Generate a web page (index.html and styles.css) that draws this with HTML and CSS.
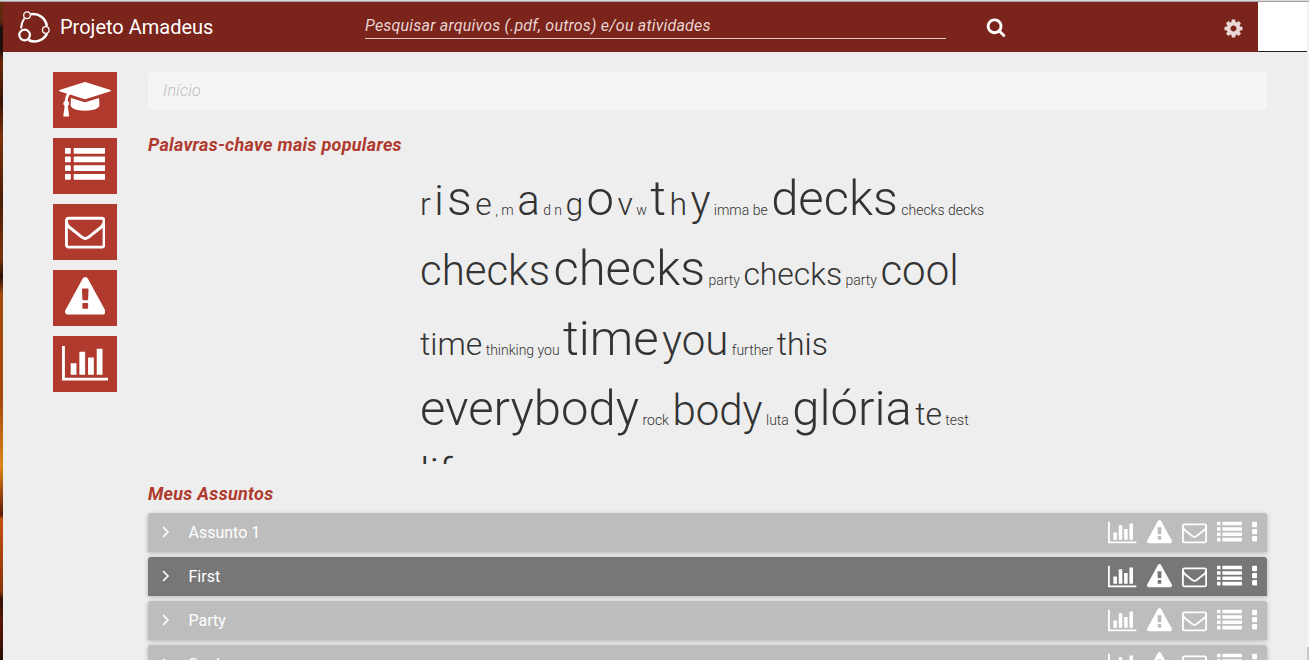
FILE: index.html
```html
<!DOCTYPE html>
<html lang="pt-BR">
<head>
<meta charset="utf-8">
<title>Projeto Amadeus</title>
<link rel="stylesheet" href="styles.css">
</head>
<body>
<svg class="defs" aria-hidden="true">
  <symbol id="cap" viewBox="0 0 2304 1792"><path d="M1774 836l18 316q4 69-82 128t-235 93.500-323 34.500-323-34.500-235-93.500-82-128l18-316 574 181q22 7 48 7t48-7zm530-324q0 23-22 31l-1120 352q-4 1-10 1t-10-1l-652-206q-43 34-71 111.500t-34 178.500q63 36 63 109 0 69-58 107l58 433q2 14-8 25-9 11-24 11h-192q-15 0-24-11-10-11-8-25l58-433q-58-38-58-107 0-73 65-111 11-207 98-330l-333-104q-22-8-22-31t22-31l1120-352q4-1 10-1t10 1l1120 352q22 8 22 31z"/></symbol>
  <symbol id="list" viewBox="0 0 1792 1792"><path d="M32 128h192q32 0 32 32v192q0 32-32 32h-192q-32 0-32-32v-192q0-32 32-32zM32 512h192q32 0 32 32v192q0 32-32 32h-192q-32 0-32-32v-192q0-32 32-32zM32 896h192q32 0 32 32v192q0 32-32 32h-192q-32 0-32-32v-192q0-32 32-32zM32 1280h192q32 0 32 32v192q0 32-32 32h-192q-32 0-32-32v-192q0-32 32-32zM416 128h1344q32 0 32 32v192q0 32-32 32h-1344q-32 0-32-32v-192q0-32 32-32zM416 512h1344q32 0 32 32v192q0 32-32 32h-1344q-32 0-32-32v-192q0-32 32-32zM416 896h1344q32 0 32 32v192q0 32-32 32h-1344q-32 0-32-32v-192q0-32 32-32zM416 1280h1344q32 0 32 32v192q0 32-32 32h-1344q-32 0-32-32v-192q0-32 32-32z"/></symbol>
  <symbol id="mail" viewBox="0 0 1792 1792"><path d="M1664 1504v-768q-32 36-69 66-268 206-426 338-51 43-83 67t-86.500 48.500-102.500 24.500h-2q-48 0-102.500-24.500t-86.500-48.500-83-67q-158-132-426-338-37-30-69-66v768q0 13 9.500 22.500t22.500 9.500h1472q13 0 22.500-9.500t9.500-22.500zm0-1051v-24.500l-.5-13-3-12.500-5.500-9-9-7.500-14-2.500h-1472q-13 0-22.500 9.500t-9.500 22.500q0 168 147 284 193 152 401 317 6 5 35 29.500t46 37.500 44.500 31.500 50.500 27.500 43 9h2q20 0 43-9t50.500-27.500 44.500-31.500 46-37.500 35-29.500q208-165 401-317 54-43 100.500-115.500t46.500-131.500zm128-37v1088q0 66-47 113t-113 47h-1472q-66 0-113-47t-47-113v-1088q0-66 47-113t113-47h1472q66 0 113 47t47 113z"/></symbol>
  <symbol id="warn" viewBox="0 0 1792 1792"><path d="M1024 1375v-190q0-14-9.500-23.500t-22.500-9.500h-192q-13 0-22.500 9.500t-9.500 23.500v190q0 14 9.500 23.500t22.500 9.500h192q13 0 22.500-9.500t9.500-23.500zm-2-374l18-459q0-12-10-19-13-11-24-11h-220q-11 0-24 11-10 7-10 21l17 457q0 10 10 16.500t24 6.500h185q14 0 23.500-6.500t10.500-16.500zm-14-934l768 1408q35 63-2 126-17 29-46.500 46t-63.500 17h-1536q-34 0-63.500-17t-46.500-46q-37-63-2-126l768-1408q17-31 47-49t65-18 65 18 47 49z"/></symbol>
  <symbol id="chart" viewBox="0 0 2048 1792"><path d="M640 896v512h-256v-512h256zm384-512v1024h-256v-1024h256zm1024 1152v128h-2048v-1536h128v1408h1920zm-640-896v768h-256v-768h256zm384-384v1152h-256v-1152h256z"/></symbol>
  <symbol id="dots" viewBox="0 0 384 1792"><rect y="128" width="384" height="384" rx="96"/><rect y="640" width="384" height="384" rx="96"/><rect y="1152" width="384" height="384" rx="96"/></symbol>
  <symbol id="gear" viewBox="0 0 1792 1792"><path d="M1152 896q0-106-75-181t-181-75-181 75-75 181 75 181 181 75 181-75 75-181zm512-109v222q0 12-8 23t-20 13l-185 28q-19 54-39 91 35 50 107 138 10 12 10 25t-9 23q-27 37-99 108t-94 71q-12 0-26-9l-138-108q-44 23-91 38-16 136-29 186-7 28-36 28h-222q-14 0-24.500-8.500t-11.500-21.500l-28-184q-49-16-90-37l-141 107q-10 9-25 9-14 0-25-11-126-114-165-168-7-10-7-23 0-12 8-23 15-21 51-66.500t54-70.500q-27-50-41-99l-183-27q-13-2-21-12.500t-8-23.500v-222q0-12 8-23t19-13l186-28q14-46 39-92-40-57-107-138-10-12-10-24 0-10 9-23 26-36 98.500-107.500t94.500-71.500q13 0 26 10l138 107q44-23 91-38 16-136 29-186 7-28 36-28h222q14 0 24.500 8.500t11.500 21.500l28 184q49 16 90 37l142-107q9-9 24-9 13 0 25 10 129 119 165 170 7 8 7 22 0 12-8 23-15 21-51 66.500t-54 70.500q26 50 41 98l183 28q13 2 21 12.500t8 23.500z"/></symbol>
  <symbol id="search" viewBox="0 0 1792 1792"><path d="M1216 832q0-185-131.500-316.500t-316.500-131.500-316.500 131.500-131.500 316.500 131.500 316.500 316.500 131.500 316.500-131.500 131.500-316.500zm512 832q0 52-38 90t-90 38q-54 0-90-38l-343-342q-179 124-399 124-143 0-273.500-55.500t-225-150-150-225-55.500-273.500 55.500-273.500 150-225 225-150 273.500-55.500 273.500 55.500 225 150 150 225 55.500 273.500q0 220-124 399l343 343q37 37 37 90z"/></symbol>
  <symbol id="chevron" viewBox="0 0 10 14"><path d="M2 2l5 5-5 5" fill="none" stroke="currentColor" stroke-width="1.700"/></symbol>
</svg>
<div class="edge-top"></div>
<div class="frame">
  <div class="strip"></div>
  <div class="page">
    <header class="topbar">
      <svg class="logo" viewBox="0 0 34 34">
        <path stroke-width="2.600" d="M14 4.200A13.700 13.700 0 0 1 29.800 16M30 23.500A13.700 13.700 0 0 1 11.500 30"/>
        <path stroke-width="2" d="M7.300 8.500Q4.200 13 4 18.500"/>
        <circle cx="10" cy="5.200" r="3.300" stroke-width="1.300"/>
        <circle cx="7.600" cy="25" r="5.300" stroke-width="2.200"/>
        <circle cx="28.800" cy="20" r="3.300" stroke-width="1.300"/>
      </svg>
      <span class="brand">Projeto Amadeus</span>
      <div class="search">Pesquisar arquivos (.pdf, outros) e/ou atividades</div>
      <svg class="search-icon"><use href="#search"/></svg>
      <svg class="gear"><use href="#gear"/></svg>
      <div class="avatar"></div>
    </header>
    <div class="content">
      <nav class="side">
        <a class="tile"><svg class="w-cap"><use href="#cap"/></svg></a>
        <a class="tile"><svg><use href="#list"/></svg></a>
        <a class="tile"><svg><use href="#mail"/></svg></a>
        <a class="tile"><svg><use href="#warn"/></svg></a>
        <a class="tile"><svg class="w-chart"><use href="#chart"/></svg></a>
      </nav>
      <main class="main">
        <div class="crumb">Início</div>
        <h4 class="title">Palavras-chave mais populares</h4>
        <div class="cloud">
          <span class="m">r</span> <span class="l">i</span> <span class="x">s</span> <span class="m">e</span> <span>,</span> <span>m</span> <span class="l">a</span> <span>d</span> <span>n</span> <span class="m">g</span> <span class="x">o</span> <span class="m">v</span> <span>w</span> <span class="x">t</span> <span class="m">h</span> <span class="l">y</span> <span>imma be</span> <span class="x">decks</span> <span>checks decks</span>
          <span class="l">checks</span> <span class="x">checks</span> <span>party</span> <span class="m">checks</span> <span>party</span> <span class="l">cool</span>
          <span class="m">time</span> <span>thinking you</span> <span class="x">time</span> <span class="l">you</span> <span>further</span> <span class="m">this</span>
          <span class="x">everybody</span> <span>rock</span> <span class="l">body</span> <span>luta</span> <span class="x">glória</span> <span class="m">te</span> <span>test</span>
          <span class="l">life</span>
        </div>
        <h4 class="title subjects">Meus Assuntos</h4>
        <div class="rows">
          <div class="row"><svg class="chev"><use href="#chevron"/></svg><span class="name">Assunto 1</span><svg class="w-chart"><use href="#chart"/></svg><svg><use href="#warn"/></svg><svg><use href="#mail"/></svg><svg><use href="#list"/></svg><svg class="w-dots"><use href="#dots"/></svg></div>
          <div class="row active"><svg class="chev"><use href="#chevron"/></svg><span class="name">First</span><svg class="w-chart"><use href="#chart"/></svg><svg><use href="#warn"/></svg><svg><use href="#mail"/></svg><svg><use href="#list"/></svg><svg class="w-dots"><use href="#dots"/></svg></div>
          <div class="row"><svg class="chev"><use href="#chevron"/></svg><span class="name">Party</span><svg class="w-chart"><use href="#chart"/></svg><svg><use href="#warn"/></svg><svg><use href="#mail"/></svg><svg><use href="#list"/></svg><svg class="w-dots"><use href="#dots"/></svg></div>
          <div class="row"><svg class="chev"><use href="#chevron"/></svg><span class="name">Soul</span><svg class="w-chart"><use href="#chart"/></svg><svg><use href="#warn"/></svg><svg><use href="#mail"/></svg><svg><use href="#list"/></svg><svg class="w-dots"><use href="#dots"/></svg></div>
        </div>
      </main>
    </div>
  </div>
  <div class="gutter"><div class="thumb"></div></div>
</div>
</body>
</html>
```
FILE: styles.css
```css
* { box-sizing: border-box; }
body {
  margin: 0;
  height: 660px;
  overflow: hidden;
  background: #eee;
  font-family: Roboto, "Liberation Sans", sans-serif;
  font-size: 14px;
  color: #333;
}
svg { display: block; fill: currentColor; flex: none; }
.defs { display: none; }
.edge-top { height: 2px; background: #d9d9d9; border-bottom: 1px solid #a3a3a3; }
.frame { display: flex; height: 658px; }
.strip {
  width: 3px;
  background: linear-gradient(#6a2c10 0, #5a250f 20px, #1c0f0c 26px, #21100a 48px, #6b2705 60px, #381405 100px, #7d3208 135px, #4a1c05 200px, #7a3407 255px, #2a1108 275px, #a24b0b 292px, #a9480a 400px, #dd8518 465px, #8b3a0a 497px, #5d1c05 513px, #c3500f 517px, #8a3406 590px, #30100a 597px, #5a1804 620px, #280b04 100%);
}
.page { flex: 1; min-width: 0; overflow: hidden; }
.gutter { width: 2px; display: flex; flex-direction: column; justify-content: flex-end; background: #f2f2f2; }
.thumb { height: 13px; background: #c9c9c9; }

.topbar { display: flex; height: 50px; background: #7a241b; color: #fff; }
.logo { width: 34px; height: 34px; margin: 8px 0 0 14px; fill: none; stroke: #fff; }
.brand { width: 305px; margin-left: 9px; font-size: 20px; line-height: 50px; white-space: nowrap; }
.search {
  width: 581px;
  height: 27px;
  margin-top: 10px;
  border-bottom: 1px solid #dcc8c6;
  font-size: 16px;
  font-style: italic;
  letter-spacing: .21px;
  line-height: 27px;
  color: #e8d5d3;
}
.search-icon { width: 20px; height: 20px; margin: 15px 0 0 40px; }
.gear { width: 21px; height: 21px; margin: 15.500px 0 0 217px; color: #ead8d6; }
.avatar { width: 49px; margin-left: auto; background: #fff; border-bottom: 1px solid #28211f; }

.content { display: flex; padding: 20px 40px 0 50px; }
.side { display: flex; flex-direction: column; gap: 10px; width: 64px; margin-right: 31px; }
.tile { display: flex; justify-content: center; height: 56px; padding-top: 6.500px; background: #b03a2e; color: #fff; }
.tile svg { width: 40.500px; height: 40.500px; }
.tile .w-cap { width: 52px; }
.tile .w-chart { width: 46.300px; }

.main { flex: 1; min-width: 0; }
.crumb {
  height: 38px;
  padding-left: 15px;
  border-radius: 4px;
  background: #f5f5f5;
  color: #bdbdbd;
  font-size: 16px;
  font-style: italic;
  font-weight: 300;
  letter-spacing: .3px;
  line-height: 37px;
}
.title { margin: 25px 0 0; font-size: 18px; font-style: italic; font-weight: 700; letter-spacing: .29px; line-height: 20px; color: #b03a2e; }
.cloud {
  width: 570px;
  height: 300px;
  margin: 9px 0 0 272px;
  overflow: hidden;
  font-weight: 300;
  line-height: 1.42857;
}
.cloud .m { font-size: 31.900px; }
.cloud .l { font-size: 42px; }
.cloud .x { font-size: 49px; }
.title.subjects { margin-top: 20px; }
.rows { display: flex; flex-direction: column; gap: 5px; margin-top: 9px; }
.row {
  display: flex;
  align-items: flex-start;
  gap: 10px;
  height: 39px;
  padding: 7px 10px 0 13px;
  border-radius: 3px 3px 0 0;
  background: #bdbdbd;
  box-shadow: 0 1px 4px rgba(0, 0, 0, .25);
  color: #fff;
}
.row.active { background: #777; }
.row svg { width: 25px; height: 25px; }
.row .w-chart { width: 28.600px; }
.row .w-dots { width: 5.400px; }
.row .chev { width: 10px; height: 14px; margin-top: 5px; }
.name { flex: 1; margin-left: 7.500px; font-size: 16px; line-height: 25px; }
```
